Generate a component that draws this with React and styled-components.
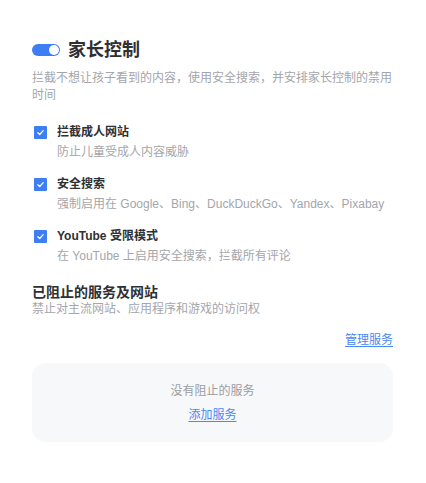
import React, { useState } from "react";
import styled, { createGlobalStyle } from "styled-components";

const GlobalStyle = createGlobalStyle`
  body {
    margin: 0;
    background: #ffffff;
    font-family: "Liberation Sans", "Noto Sans CJK SC", sans-serif;
  }
`;

const options = [
  {
    id: "adult",
    title: "拦截成人网站",
    desc: "防止儿童受成人内容威胁",
  },
  {
    id: "safe",
    title: "安全搜索",
    desc: "强制启用在 Google、Bing、DuckDuckGo、Yandex、Pixabay",
  },
  {
    id: "youtube",
    title: "YouTube 受限模式",
    desc: "在 YouTube 上启用安全搜索，拦截所有评论",
  },
];

function Check() {
  return (
    <svg width="9" height="9" viewBox="0 0 10 10">
      <path
        d="M2 5.2 L4.2 7.2 L8 3"
        fill="none"
        stroke="#fff"
        strokeWidth="1.4"
        strokeLinecap="round"
        strokeLinejoin="round"
      />
    </svg>
  );
}

function App() {
  const [enabled, setEnabled] = useState(true);
  const [checked, setChecked] = useState({ adult: true, safe: true, youtube: true });

  return (
    <Page>
      <GlobalStyle />
      <Header>
        <Toggle $on={enabled} onClick={() => setEnabled(!enabled)}>
          <Knob $on={enabled} />
        </Toggle>
        <Heading>家长控制</Heading>
      </Header>
      <Description>
        拦截不想让孩子看到的内容，使用安全搜索，并安排家长控制的禁用时间
      </Description>

      <OptionList>
        {options.map((opt) => (
          <OptionRow key={opt.id}>
            <CheckBox
              $on={checked[opt.id]}
              onClick={() => setChecked({ ...checked, [opt.id]: !checked[opt.id] })}
            >
              {checked[opt.id] && <Check />}
            </CheckBox>
            <OptionText>
              <OptionTitle>{opt.title}</OptionTitle>
              <OptionDesc>{opt.desc}</OptionDesc>
            </OptionText>
          </OptionRow>
        ))}
      </OptionList>

      <SectionTitle>已阻止的服务及网站</SectionTitle>
      <SectionDesc>禁止对主流网站、应用程序和游戏的访问权</SectionDesc>

      <LinkRow>
        <Link href="#">管理服务</Link>
      </LinkRow>

      <EmptyCard>
        <EmptyText>没有阻止的服务</EmptyText>
        <Link href="#">添加服务</Link>
      </EmptyCard>
    </Page>
  );
}

const Page = styled.div`
  width: 361px;
  padding: 38px 32px;
  font-family: "Liberation Sans", "Noto Sans CJK SC", sans-serif;
`;

const Header = styled.div`
  display: flex;
  align-items: center;
  gap: 8px;
  height: 24px;
`;

const Toggle = styled.div`
  width: 28px;
  height: 12px;
  border-radius: 6px;
  background: ${(p) => (p.$on ? "#3d7ef5" : "#d0d4da")};
  display: flex;
  align-items: center;
  justify-content: ${(p) => (p.$on ? "flex-end" : "flex-start")};
  padding: 0 1px;
  box-sizing: border-box;
  cursor: pointer;
`;

const Knob = styled.span`
  width: 10px;
  height: 10px;
  border-radius: 50%;
  background: #fff;
`;

const Heading = styled.h1`
  margin: 0;
  font-size: 18px;
  font-weight: 700;
  color: #2f3033;
  line-height: 24px;
`;

const Description = styled.p`
  margin: 8px 0 0;
  font-size: 12px;
  line-height: 17px;
  color: #a3a6ab;
`;

const OptionList = styled.div`
  margin-top: 19px;
  display: flex;
  flex-direction: column;
  gap: 14px;
`;

const OptionRow = styled.div`
  display: flex;
  align-items: flex-start;
  gap: 10px;
  padding-left: 2px;
`;

const CheckBox = styled.div`
  width: 13px;
  height: 13px;
  margin-top: 3px;
  border-radius: 1px;
  background: ${(p) => (p.$on ? "#3d7ef5" : "#fff")};
  border: ${(p) => (p.$on ? "none" : "1px solid #c5c9cf")};
  display: flex;
  align-items: center;
  justify-content: center;
  cursor: pointer;
  flex-shrink: 0;
`;

const OptionText = styled.div`
  display: flex;
  flex-direction: column;
  gap: 2px;
`;

const OptionTitle = styled.div`
  font-size: 12px;
  font-weight: 700;
  line-height: 18px;
  color: #2f3033;
`;

const OptionDesc = styled.div`
  font-size: 12px;
  line-height: 18px;
  color: #a3a6ab;
  white-space: nowrap;
`;

const SectionTitle = styled.h2`
  margin: 18px 0 0;
  font-size: 14px;
  font-weight: 700;
  line-height: 18px;
  color: #2f3033;
`;

const SectionDesc = styled.p`
  margin: 0;
  font-size: 12px;
  line-height: 17px;
  color: #a3a6ab;
`;

const LinkRow = styled.div`
  margin-top: 13px;
  display: flex;
  justify-content: flex-end;
`;

const Link = styled.a`
  font-size: 12px;
  line-height: 18px;
  color: #4a88f3;
  text-decoration: underline;
  text-underline-offset: 2px;
`;

const EmptyCard = styled.div`
  margin-top: 14px;
  height: 79px;
  box-sizing: border-box;
  padding: 19px 0 18px;
  border-radius: 14px;
  background: #f7f8fa;
  display: flex;
  flex-direction: column;
  align-items: center;
  gap: 6px;
`;

const EmptyText = styled.div`
  font-size: 12px;
  line-height: 18px;
  color: #9a9da2;
`;

export default App;
